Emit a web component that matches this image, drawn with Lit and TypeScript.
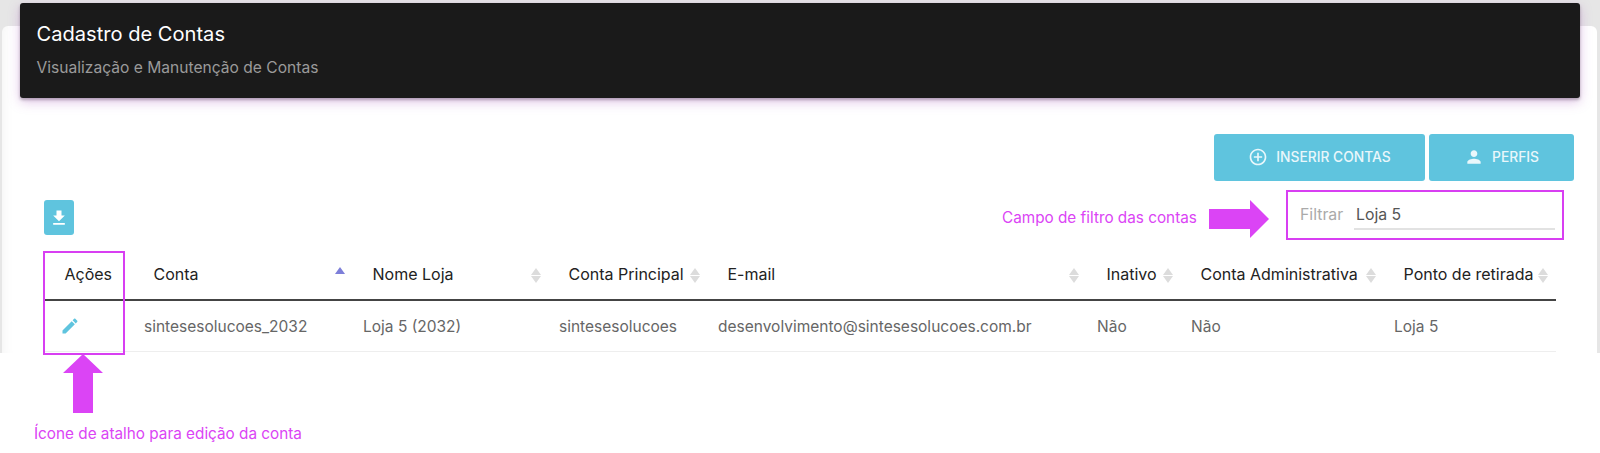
import { LitElement, html, css, svg } from "lit";
import { customElement } from "lit/decorators.js";

const columns = [
  { label: "Ações", value: "", sort: "" },
  { label: "Conta", value: "sintesesolucoes_2032", sort: "asc" },
  { label: "Nome Loja", value: "Loja 5 (2032)", sort: "none" },
  { label: "Conta Principal", value: "sintesesolucoes", sort: "none" },
  { label: "E-mail", value: "desenvolvimento@sintesesolucoes.com.br", sort: "none" },
  { label: "Inativo", value: "Não", sort: "none" },
  { label: "Conta Administrativa", value: "Não", sort: "none" },
  { label: "Ponto de retirada", value: "Loja 5", sort: "none" },
];

const icon = (d: string, size: number) => html`<svg width=${size} height=${size} viewBox="0 0 24 24" fill="currentColor">${svg`<path d=${d}></path>`}</svg>`;

const ICONS = {
  add: "M13 7h-2v4H7v2h4v4h2v-4h4v-2h-4V7zm-1-5C6.48 2 2 6.48 2 12s4.48 10 10 10 10-4.48 10-10S17.52 2 12 2zm0 18c-4.41 0-8-3.59-8-8s3.59-8 8-8 8 3.59 8 8-3.59 8-8 8z",
  person: "M12 12c2.21 0 4-1.79 4-4s-1.79-4-4-4-4 1.79-4 4 1.79 4 4 4zm0 2c-2.67 0-8 1.34-8 4v2h16v-2c0-2.66-5.33-4-8-4z",
  download: "M19 9h-4V3H9v6H5l7 7 7-7zM5 18v2h14v-2H5z",
  edit: "M3 17.25V21h3.75L17.81 9.94l-3.75-3.75L3 17.25zM20.71 7.04c.39-.39.39-1.02 0-1.41l-2.34-2.34c-.39-.39-1.02-.39-1.41 0l-1.83 1.83 3.75 3.75 1.83-1.83z",
};

@customElement("app-root")
export class AppRoot extends LitElement {
  static styles = css`
    :host {
      display: block;
      font-family: Inter, Roboto, sans-serif;
    }
    .page {
      position: relative;
      height: 453px;
      overflow: hidden;
      background: #fff;
    }
    .backdrop {
      height: 353px;
      box-sizing: border-box;
      padding: 26px 3px 0 2px;
      background: #e6e6e6;
    }
    .card {
      height: 327px;
      background: #fff;
      border-radius: 6px 6px 0 0;
      box-shadow: inset 12px 0 14px -12px rgba(0, 0, 0, 0.06);
    }
    .header {
      margin: 0 17px 0 18px;
      transform: translateY(-23px);
      height: 95px;
      box-sizing: border-box;
      padding: 19px 16.5px 0;
      background: #1a1a1a;
      border-radius: 3px;
      box-shadow: 0 4px 12px rgba(170, 90, 190, 0.35), 0 2px 3px rgba(0, 0, 0, 0.3);
    }
    .title {
      color: #fff;
      font-size: 20.1px;
      line-height: 24px;
    }
    .subtitle {
      margin-top: 13px;
      color: #9a9a9a;
      font-size: 15.6px;
      line-height: 18px;
    }
    .actions {
      display: flex;
      justify-content: flex-end;
      gap: 4px;
      margin-top: 13px;
      padding-right: 23px;
    }
    .btn {
      display: flex;
      align-items: center;
      justify-content: center;
      gap: 8px;
      height: 47px;
      box-sizing: border-box;
      padding-bottom: 2px;
      background: #5fc4de;
      color: #e9f7fb;
      border-radius: 3px;
      font-size: 13.8px;
      font-weight: 500;
    }
    .btn.insert { width: 211px; }
    .btn.profiles { width: 145px; }
    .toolbar {
      display: flex;
      justify-content: space-between;
      align-items: flex-start;
      margin-top: 19px;
      padding: 0 42px 0 41.5px;
      height: 50px;
    }
    .download {
      display: flex;
      align-items: center;
      justify-content: center;
      width: 30px;
      height: 35px;
      background: #5fc4de;
      color: #fff;
      border-radius: 3px;
    }
    .filter {
      display: flex;
      align-items: flex-start;
      width: 255px;
      height: 30px;
      color: #aaa;
      font-size: 15.8px;
    }
    .filter .label {
      width: 54px;
      line-height: 30px;
    }
    .filter .input {
      flex: 1;
      height: 28px;
      line-height: 30px;
      padding-left: 2px;
      color: #555;
      border-bottom: 2px solid #e2e2e2;
    }
    .table {
      display: grid;
      grid-template-columns: 89px 219px 196px 159px 379px 94px 203px 172px;
      margin: 0 41px 0 43px;
    }
    .th {
      display: flex;
      align-items: center;
      justify-content: space-between;
      height: 51px;
      box-sizing: border-box;
      padding: 0 8.5px 2px 19.5px;
      font-size: 16px;
      color: #222;
      border-bottom: 2px solid #444;
      white-space: nowrap;
    }
    .td {
      display: flex;
      align-items: center;
      height: 51px;
      box-sizing: border-box;
      padding: 0 0 0 10px;
      font-size: 15.5px;
      color: #666;
      border-bottom: 1px solid #eee;
      white-space: nowrap;
    }
    .td.edit {
      padding-left: 15px;
      color: #5fc4de;
    }
    .sort {
      display: flex;
      flex-direction: column;
      gap: 1px;
      flex: none;
      margin-top: 4px;
    }
    .up, .down {
      width: 0;
      height: 0;
      border-left: 5px solid transparent;
      border-right: 5px solid transparent;
    }
    .up { border-bottom: 7px solid #dcdcdc; }
    .down { border-top: 7px solid #dcdcdc; }
    .sort.asc { align-self: flex-start; margin-top: 17px; }
    .sort.asc .up { border-bottom-color: #7d7fd9; }
    .sort.asc .down { visibility: hidden; }
    .box {
      position: absolute;
      box-sizing: border-box;
      border: 2px solid #d83ff2;
    }
    .box.filter-box { left: 1286px; top: 190px; width: 278px; height: 50px; }
    .box.actions-box { left: 43px; top: 251px; width: 82px; height: 104px; }
    .note {
      position: absolute;
      color: #db44f5;
      font-size: 15.3px;
      line-height: 18px;
      white-space: nowrap;
    }
    .note.filter-note { left: 1002px; top: 209px; }
    .note.edit-note { left: 34px; top: 425px; }
    .arrow {
      position: absolute;
      fill: #db44f5;
    }
    .arrow.right { left: 1209px; top: 200px; }
    .arrow.up-arrow { left: 63px; top: 354px; }
  `;

  private sortIcon(kind: string) {
    if (!kind) return null;
    return html`<span class="sort ${kind}"><span class="up"></span><span class="down"></span></span>`;
  }

  render() {
    return html`
      <div class="page">
        <div class="backdrop">
          <div class="card">
            <div class="header">
              <div class="title">Cadastro de Contas</div>
              <div class="subtitle">Visualização e Manutenção de Contas</div>
            </div>
            <div class="actions">
              <div class="btn insert">${icon(ICONS.add, 20)}<span>INSERIR CONTAS</span></div>
              <div class="btn profiles">${icon(ICONS.person, 20)}<span>PERFIS</span></div>
            </div>
            <div class="toolbar">
              <div class="download">${icon(ICONS.download, 20)}</div>
              <div class="filter">
                <span class="label">Filtrar</span>
                <span class="input">Loja 5</span>
              </div>
            </div>
            <div class="table">
              ${columns.map((c) => html`<div class="th"><span>${c.label}</span>${this.sortIcon(c.sort)}</div>`)}
              ${columns.map((c, i) =>
                i === 0
                  ? html`<div class="td edit">${icon(ICONS.edit, 20)}</div>`
                  : html`<div class="td">${c.value}</div>`
              )}
            </div>
          </div>
        </div>
        <div class="box filter-box"></div>
        <div class="box actions-box"></div>
        <div class="note filter-note">Campo de filtro das contas</div>
        <div class="note edit-note">Ícone de atalho para edição da conta</div>
        <svg class="arrow right" width="60" height="38" viewBox="0 0 60 38"><polygon points="0,9 41,9 41,0 60,19 41,38 41,29 0,29"></polygon></svg>
        <svg class="arrow up-arrow" width="40" height="59" viewBox="0 0 40 59"><polygon points="20,0 40,19 30,19 30,59 10,59 10,19 0,19"></polygon></svg>
      </div>
    `;
  }
}
